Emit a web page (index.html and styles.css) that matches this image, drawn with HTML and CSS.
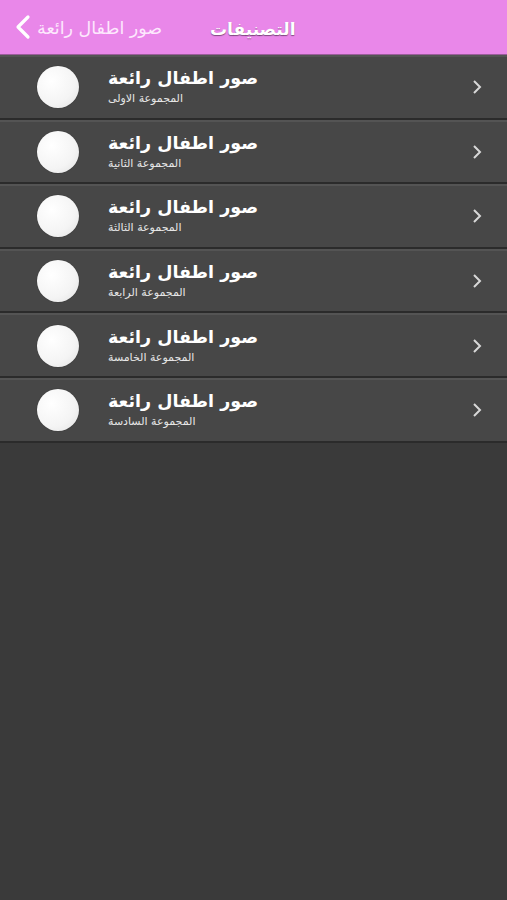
FILE: index.html
```html
<!DOCTYPE html>
<html lang="ar">
<head>
<meta charset="utf-8">
<link rel="stylesheet" href="styles.css">
</head>
<body>
<header class="nav">
  <div class="back">
    <svg class="chev-back" width="18" height="26" viewBox="0 0 18 26"><path d="M14 3 L4 13 L14 23" fill="none" stroke="#fff" stroke-width="3.2" stroke-linecap="round" stroke-linejoin="round"/></svg>
    <span class="back-text" dir="rtl">صور اطفال رائعة</span>
  </div>
  <div class="title" dir="rtl">التصنيفات</div>
</header>
<ul class="list">
  <li class="row"><span class="thumb"></span><div class="texts"><span class="t1" dir="rtl">صور اطفال رائعة</span><span class="t2" dir="rtl">المجموعة الاولى</span></div><svg class="chev" width="12" height="18" viewBox="0 0 12 18"><path d="M3 3 L9 9 L3 15" fill="none" stroke="#d8d8d8" stroke-width="2"/></svg></li>
  <li class="row"><span class="thumb"></span><div class="texts"><span class="t1" dir="rtl">صور اطفال رائعة</span><span class="t2" dir="rtl">المجموعة الثانية</span></div><svg class="chev" width="12" height="18" viewBox="0 0 12 18"><path d="M3 3 L9 9 L3 15" fill="none" stroke="#d8d8d8" stroke-width="2"/></svg></li>
  <li class="row"><span class="thumb"></span><div class="texts"><span class="t1" dir="rtl">صور اطفال رائعة</span><span class="t2" dir="rtl">المجموعة الثالثة</span></div><svg class="chev" width="12" height="18" viewBox="0 0 12 18"><path d="M3 3 L9 9 L3 15" fill="none" stroke="#d8d8d8" stroke-width="2"/></svg></li>
  <li class="row"><span class="thumb"></span><div class="texts"><span class="t1" dir="rtl">صور اطفال رائعة</span><span class="t2" dir="rtl">المجموعة الرابعة</span></div><svg class="chev" width="12" height="18" viewBox="0 0 12 18"><path d="M3 3 L9 9 L3 15" fill="none" stroke="#d8d8d8" stroke-width="2"/></svg></li>
  <li class="row"><span class="thumb"></span><div class="texts"><span class="t1" dir="rtl">صور اطفال رائعة</span><span class="t2" dir="rtl">المجموعة الخامسة</span></div><svg class="chev" width="12" height="18" viewBox="0 0 12 18"><path d="M3 3 L9 9 L3 15" fill="none" stroke="#d8d8d8" stroke-width="2"/></svg></li>
  <li class="row"><span class="thumb"></span><div class="texts"><span class="t1" dir="rtl">صور اطفال رائعة</span><span class="t2" dir="rtl">المجموعة السادسة</span></div><svg class="chev" width="12" height="18" viewBox="0 0 12 18"><path d="M3 3 L9 9 L3 15" fill="none" stroke="#d8d8d8" stroke-width="2"/></svg></li>
</ul>
</body>
</html>
```
FILE: styles.css
```css
html, body {
  margin: 0;
  padding: 0;
  background: #3a3a3a;
  height: 100%;
}
body {
  font-family: "DejaVu Sans", "Noto Sans", sans-serif;
  color: #fff;
}
.nav {
  position: relative;
  height: 54px;
  background: #e987e9;
  border-bottom: 1px solid #9b5c9b;
  display: flex;
  align-items: center;
}
.back {
  display: flex;
  align-items: center;
  padding-left: 14px;
  gap: 5px;
}
.back-text {
  font-size: 17.5px;
  color: #fde8fd;
  padding-top: 2px;
}
.title {
  position: absolute;
  left: 210px;
  top: 0;
  height: 54px;
  display: flex;
  align-items: center;
  font-size: 17px;
  font-weight: bold;
  color: #fff;
  text-shadow: 0 1px 1px rgba(0,0,0,0.45);
  padding-top: 2px;
}
.list {
  list-style: none;
  margin: 0;
  padding: 0;
  background: #3a3a3a;
}
.row {
  height: 60.6px;
  background: #474747;
  border-top: 2px solid #545454;
  border-bottom: 2px solid #2b2b2b;
  display: flex;
  align-items: center;
  padding-left: 37px;
  padding-right: 24px;
}
.thumb {
  width: 42px;
  height: 42px;
  border-radius: 50%;
  background: radial-gradient(circle at 35% 35%, #ffffff 0%, #f4f4f4 60%, #e0e0e0 100%);
  box-shadow: 0 0 1px rgba(0,0,0,0.5);
  flex: none;
}
.texts {
  display: flex;
  flex-direction: column;
  align-items: flex-start;
  margin-left: 29px;
  flex: 1;
}
.t1 {
  font-size: 17.5px;
  font-weight: bold;
  line-height: 23px;
  color: #fff;
}
.t2 {
  font-size: 11px;
  line-height: 17px;
  color: #e6e6e6;
}
.chev {
  flex: none;
}
```
